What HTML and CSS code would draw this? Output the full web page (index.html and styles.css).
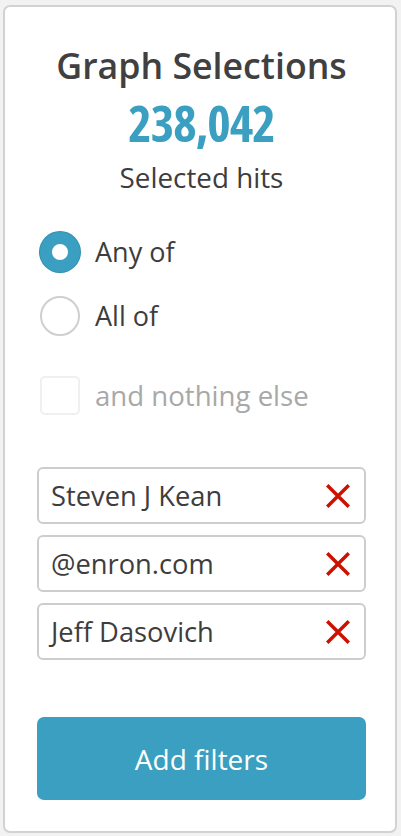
FILE: index.html
```html
<!DOCTYPE html>
<html>
<head>
<meta charset="utf-8">
<link rel="stylesheet" href="styles.css">
</head>
<body>
<div class="card">
  <h1 class="title">Graph Selections</h1>
  <div class="count">238,042</div>
  <div class="sub">Selected hits</div>

  <div class="options">
    <label class="opt"><span class="radio on"></span><span>Any of</span></label>
    <label class="opt"><span class="radio"></span><span>All of</span></label>
    <label class="opt dim"><span class="check"></span><span>and nothing else</span></label>
  </div>

  <div class="filters">
    <div class="filter"><span>Steven J Kean</span><svg class="x" viewBox="0 0 26 26"><path d="M3 3L23 23M23 3L3 23" stroke="#cc1100" stroke-width="3.2" fill="none"/></svg></div>
    <div class="filter"><span>@enron.com</span><svg class="x" viewBox="0 0 26 26"><path d="M3 3L23 23M23 3L3 23" stroke="#cc1100" stroke-width="3.2" fill="none"/></svg></div>
    <div class="filter"><span>Jeff Dasovich</span><svg class="x" viewBox="0 0 26 26"><path d="M3 3L23 23M23 3L3 23" stroke="#cc1100" stroke-width="3.2" fill="none"/></svg></div>
  </div>

  <button class="add">Add filters</button>
</div>
</body>
</html>
```
FILE: styles.css
```css
html, body {
  margin: 0;
  padding: 0;
  background: #f2f2f2;
  font-family: "Open Sans", "Noto Sans", sans-serif;
  color: #3d3d3d;
}
.card {
  box-sizing: border-box;
  margin: 5px 0 0 3px;
  width: 394px;
  height: 828px;
  background: #fff;
  border: 2px solid #d2d2d2;
  border-radius: 7px;
  padding: 0 29px 0 32px;
  display: flex;
  flex-direction: column;
}
.title {
  margin: 36px 0 0;
  text-align: center;
  font-size: 35.7px;
  font-weight: 600;
  line-height: 44px;
  color: #404040;
}
.count {
  margin-top: 11px;
  text-align: center;
  font-size: 50px;
  font-weight: 700;
  font-stretch: condensed;
  line-height: 50px;
  color: #3a9fc0;
  letter-spacing: -1px;
}
.sub {
  margin-top: 13px;
  text-align: center;
  font-size: 27.8px;
  line-height: 32px;
}
.options {
  margin-top: 39px;
  display: flex;
  flex-direction: column;
  gap: 24px;
}
.opt {
  display: flex;
  align-items: center;
  gap: 15px;
  font-size: 27px;
  line-height: 40px;
  height: 40px;
  padding-left: 3px;
}
.opt.dim {
  margin-top: 15px;
  color: #a8a8a8;
  font-size: 27.6px;
}
.radio {
  box-sizing: border-box;
  width: 40px;
  height: 40px;
  border-radius: 50%;
  border: 2px solid #cfcfcf;
  background: #fff;
}
.radio.on {
  border: 12px solid #3a9fc0;
  box-shadow: 0 0 0 1px #2f8fb0;
}
.check {
  box-sizing: border-box;
  width: 40px;
  height: 39px;
  border-radius: 5px;
  border: 2px solid #f0f0f0;
}
.filters {
  margin-top: 52px;
  display: flex;
  flex-direction: column;
  gap: 11px;
}
.filter {
  box-sizing: border-box;
  height: 57px;
  border: 2px solid #cdcdcd;
  border-radius: 6px;
  display: flex;
  align-items: center;
  justify-content: space-between;
  padding: 0 12px 0 12px;
  font-size: 27.3px;
}
.x {
  width: 28px;
  height: 28px;
}
.add {
  margin-top: 57px;
  height: 83px;
  border: none;
  border-radius: 7px;
  background: #3a9fc0;
  color: #fff;
  font-family: "Open Sans", "Noto Sans", sans-serif;
  font-size: 28px;
  padding: 0;
}
```
